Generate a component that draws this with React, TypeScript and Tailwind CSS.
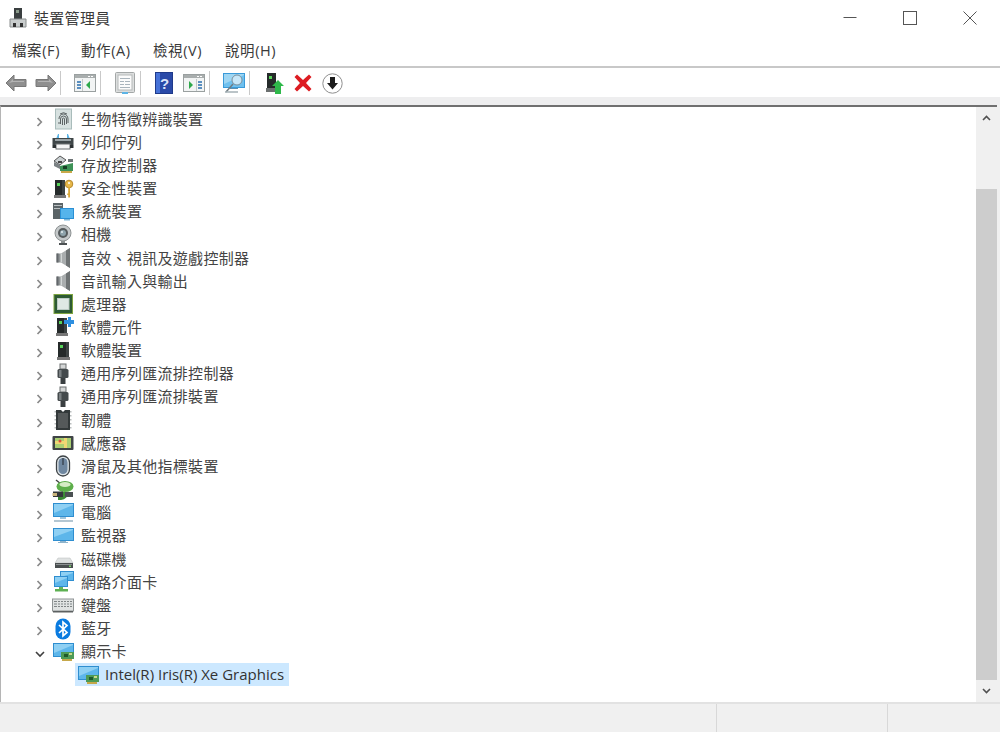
import React from "react";

type I = React.FC;
const S = ({ w = 22, h = 22, children }: { w?: number; h?: number; children: React.ReactNode }) => (
  <svg width={w} height={h} viewBox={`0 0 ${w} ${h}`} className="block shrink-0">{children}</svg>
);

const Tower = ({ x = 5, w = 11, led = "#58d35a" }: { x?: number; w?: number; led?: string }) => (
  <g>
    <path d={`M${x} 2h${w}v15h-${w}z`} fill="#252a2a" />
    <path d={`M${x + w - 3} 2h3v15h-3z`} fill="#3d4343" />
    <path d={`M${x + 2} 5h3v3h-3z`} fill={led} />
    <path d={`M${x - 1} 17h${w + 2}v3h-${w + 2}z`} fill="#777" />
  </g>
);

const Monitor = ({ x = 1, y = 2, w = 20, h = 13 }: { x?: number; y?: number; w?: number; h?: number }) => (
  <g>
    <rect x={x} y={y} width={w} height={h} fill="#2f8ed0" />
    <rect x={x + 1} y={y + 1} width={w - 2} height={h - 2} fill="#8fd0f3" />
    <path d={`M${x + 1} ${y + h - 4}L${x + w - 1} ${y + 2}V${y + h - 1}H${x + 1}z`} fill="#5db6ea" />
  </g>
);

const Card = ({ x = 8, y = 12 }: { x?: number; y?: number }) => (
  <g>
    <rect x={x} y={y} width={13} height={7} fill="#4d9a55" />
    <rect x={x + 3} y={y + 2} width={4} height={3} fill="#1f5a2a" />
    <rect x={x + 8} y={y + 1} width={3} height={2} fill="#c9d98a" />
    <path d={`M${x + 1} ${y + 7}h10v2h-10z`} fill="#c6a84a" />
  </g>
);

const Fingerprint: I = () => (
  <S>
    <rect x="3.500" y="1" width="16" height="20" fill="#d7e1e0" stroke="#a9bcbb" />
    <g fill="none" stroke="#4e5556" strokeWidth="0.900">
      <path d="M7 11a4.500 5 0 0 1 9 0v4" />
      <path d="M8.500 16v-5a3 3 0 0 1 6 0v5" />
      <path d="M10.500 17v-6a1 1 0 0 1 2 0v6" />
      <path d="M7 14v2M8 6a5.500 5 0 0 1 7 0" />
    </g>
  </S>
);
const Printer: I = () => (
  <S>
    <path d="M6 3h10l2 5H4z" fill="#5cb4e6" />
    <path d="M7 3h8v4H7z" fill="#ffffff" />
    <rect x="0.500" y="7" width="21" height="7" fill="#3f4648" />
    <rect x="3" y="8" width="16" height="2" fill="#9aa3a6" />
    <rect x="4" y="13" width="14" height="5" fill="#f5f5f5" stroke="#6a6f70" />
    <path d="M0.500 14H4v3H0.500zM18 14h3.500v3H18z" fill="#2d3234" />
  </S>
);
const Storage: I = () => (
  <S>
    <path d="M2 7l6-5 6 4-6 5z" fill="#c9cfd1" stroke="#555" />
    <path d="M6 7h4v2H6z" fill="#444" />
    <path d="M2 8v4l6 3v-4z" fill="#7a8083" />
    <path d="M8 12l13-3v8H8z" fill="#3d9257" />
    <rect x="11" y="12" width="4" height="3" fill="#173f25" />
    <path d="M9 17h11v2H9z" fill="#c9a94a" />
    <path d="M16 5h5v3h-5z" fill="#6d7375" />
  </S>
);
const Security: I = () => (
  <S>
    <Tower x={3} w={10} />
    <circle cx="17" cy="6" r="3.800" fill="#e7b84a" stroke="#b5872a" />
    <circle cx="17" cy="5" r="1" fill="#fff" />
    <path d="M16.200 9H18v10l-1 1-.8-1v-2h-1v-1.500h1z" fill="#d9a83a" />
  </S>
);
const System: I = () => (
  <S>
    <path d="M1 2h10v16H1z" fill="#5b6467" />
    <path d="M2 4h8v1H2zM2 7h8v1H2z" fill="#b9bfc1" />
    <rect x="8" y="7" width="14" height="11" fill="#2a8fd4" />
    <rect x="9" y="8" width="12" height="9" fill="#55b4ec" />
    <path d="M12 18h6v1.500h-6z" fill="#7fb7d8" />
  </S>
);
const Camera: I = () => (
  <S>
    <circle cx="11" cy="9" r="8" fill="#c4c8c9" stroke="#8d9293" />
    <circle cx="11" cy="9" r="5" fill="#555b5d" />
    <circle cx="11" cy="9" r="3" fill="#8fa4ac" />
    <circle cx="10" cy="8" r="1" fill="#e7eff2" />
    <path d="M9 17h4v2H9z" fill="#8d9293" />
    <path d="M7 19h8v2H7z" fill="#4d5254" />
  </S>
);
const Speaker: I = () => (
  <S>
    <path d="M4.500 6.500H10v9H4.500z" fill="#8f9495" />
    <path d="M9 6.500L18 1v20l-9-5.500z" fill="#a9adae" />
    <path d="M14 3.500L18 1v20l-4-2.500z" fill="#6f7475" />
    <path d="M4.500 6.500h2v9h-2z" fill="#62676a" />
    <path d="M8.500 6.500h1.500v9H8.500z" fill="#d2d6d6" />
  </S>
);
const Cpu: I = () => (
  <S>
    <rect x="1.500" y="1" width="19.500" height="20" fill="#7da43f" />
    <rect x="2.500" y="2" width="17.500" height="18" fill="#2d5a34" />
    <rect x="5" y="5" width="12.500" height="12" fill="#bccbc5" />
    <rect x="6" y="6" width="10.500" height="10" fill="#dfe8e4" />
  </S>
);
const SoftComp: I = () => (
  <S>
    <Tower x={5} w={10} />
    <path d="M12 4h4V1h3v3h3v4h-3v3h-3V8h-4z" fill="#2e8fe0" />
  </S>
);
const SoftDev: I = () => (
  <S>
    <Tower x={6} w={11} />
  </S>
);
const Usb: I = () => (
  <S>
    <rect x="8" y="1" width="6" height="5" fill="#d4d6d6" stroke="#6a6e6f" />
    <rect x="5.500" y="6" width="11" height="9" rx="1.500" fill="#444a4c" />
    <path d="M8.500 15h5v6h-5z" fill="#3a3f41" />
    <path d="M7 7h2.500v7H7z" fill="#7a8082" />
  </S>
);
const Firmware: I = () => (
  <S>
    <path d="M4 1h5l2 2 2-2h5v20H4z" fill="#33393a" />
    <rect x="6" y="4" width="10" height="15" fill="#55595a" />
    <g fill="#b9bdbd">
      <path d="M2.500 2H4v1.500H2.500zM2.500 6H4v1.500H2.500zM2.500 10H4v1.500H2.500zM2.500 14H4v1.500H2.500zM2.500 18H4v1.500H2.500zM18 2h1.500v1.500H18zM18 6h1.500v1.500H18zM18 10h1.500v1.500H18zM18 14h1.500v1.500H18zM18 18h1.500v1.500H18z" />
    </g>
  </S>
);
const Sensor: I = () => (
  <S>
    <rect x="0.500" y="4" width="21" height="14" rx="1" fill="#3f4446" />
    <rect x="3" y="6" width="16" height="10" fill="#a9cf72" />
    <path d="M3 9h9v3H3zM12 6h3v10h-3z" fill="#f0d774" />
    <circle cx="8" cy="9" r="1.500" fill="#d9523c" />
  </S>
);
const Mouse: I = () => (
  <S>
    <rect x="4.500" y="1" width="13" height="20" rx="6.500" fill="#dfe6ea" stroke="#3c4144" strokeWidth="1.300" />
    <rect x="6.500" y="3" width="9" height="16" rx="4.500" fill="#6f87a0" />
    <path d="M11 3v7" stroke="#2f3842" strokeWidth="1.200" />
  </S>
);
const Battery: I = () => (
  <S>
    <path d="M4 1l5 4" stroke="#444" strokeWidth="1.500" />
    <ellipse cx="13" cy="7.500" rx="8.500" ry="5.500" fill="#5dae4a" />
    <ellipse cx="13" cy="5.500" rx="5.500" ry="2.500" fill="#d6ecc5" />
    <path d="M6 13h10a7 7 0 0 1-7 8H6z" fill="#3b8a35" />
    <path d="M1 12.500h10v5.500H1z" fill="#33383a" />
    <path d="M0.500 14H5v3H0.500z" fill="#c8b27a" />
    <path d="M13 13h8v5h-8z" fill="#4a5052" />
  </S>
);
const Computer: I = () => (
  <S>
    <Monitor x={1} y={1} w={21} h={14} />
    <path d="M8 15h6v2H8z" fill="#9fc5dc" />
    <path d="M2 18h19v2H2z" fill="#b3c6d2" />
  </S>
);
const MonitorI: I = () => (
  <S>
    <Monitor x={1} y={3} w={21} h={13} />
    <path d="M8 16h6v1h2v1H6v-1h2z" fill="#8fb4cc" />
  </S>
);
const Disk: I = () => (
  <S>
    <path d="M6 10h12l3 5H3z" fill="#dfe2e2" stroke="#b5b9b9" strokeWidth="0.500" />
    <rect x="3" y="15" width="18" height="5" fill="#4a4f50" />
    <rect x="4" y="16" width="16" height="1" fill="#8b9091" />
    <rect x="17" y="17.500" width="2" height="1.500" fill="#7bd36a" />
  </S>
);
const Network: I = () => (
  <S>
    <Monitor x={8} y={0} w={14} h={10} />
    <Monitor x={2} y={5} w={14} h={11} />
    <path d="M7 16h4v2H7z" fill="#66b35a" />
    <path d="M3 18h13v2.500H3z" fill="#5db052" />
  </S>
);
const Keyboard: I = () => (
  <S>
    <rect x="0.500" y="5" width="21" height="12" fill="#dfe2e2" stroke="#8f9495" />
    <g fill="#7f8485">
      <path d="M2 7h18v1H2zM2 9.500h18v1H2zM2 12h18v1H2z" />
    </g>
    <g fill="#dfe2e2">
      <path d="M5 7h1v6H5zM8 7h1v6H8zM11 7h1v6h-1zM14 7h1v6h-1zM17 7h1v6h-1z" />
    </g>
    <path d="M1 17h20v1.500H1z" fill="#5c6061" />
  </S>
);
const Bluetooth: I = () => (
  <S>
    <rect x="3.500" y="0.500" width="15" height="21" rx="7.500" fill="#0a7be0" />
    <path d="M7 7l8 7.500-4 3.500V4l4 3.500L7 15" fill="none" stroke="#fff" strokeWidth="1.700" />
  </S>
);
const Display: I = () => (
  <S>
    <Monitor x={1} y={2} w={21} h={14} />
    <Card x={9} y={11} />
  </S>
);

const Chevron = ({ open }: { open?: boolean }) => (
  <svg width="10" height="10" viewBox="0 0 10 10" className="block">
    {open ? (
      <path d="M1 3l4 4 4-4" fill="none" stroke="#404040" strokeWidth="1.600" />
    ) : (
      <path d="M2.500 1l3.800 4-3.800 4" fill="none" stroke="#8a8a8a" strokeWidth="1.700" />
    )}
  </svg>
);

const rows: [string, I][] = [
  ["生物特徵辨識裝置", Fingerprint],
  ["列印佇列", Printer],
  ["存放控制器", Storage],
  ["安全性裝置", Security],
  ["系統裝置", System],
  ["相機", Camera],
  ["音效、視訊及遊戲控制器", Speaker],
  ["音訊輸入與輸出", Speaker],
  ["處理器", Cpu],
  ["軟體元件", SoftComp],
  ["軟體裝置", SoftDev],
  ["通用序列匯流排控制器", Usb],
  ["通用序列匯流排裝置", Usb],
  ["韌體", Firmware],
  ["感應器", Sensor],
  ["滑鼠及其他指標裝置", Mouse],
  ["電池", Battery],
  ["電腦", Computer],
  ["監視器", MonitorI],
  ["磁碟機", Disk],
  ["網路介面卡", Network],
  ["鍵盤", Keyboard],
  ["藍牙", Bluetooth],
  ["顯示卡", Display],
];

const Sep = () => <div className="w-px h-[24px] bg-[#c9c9c9] shrink-0" />;

const Window = ({ right }: { right?: boolean }) => (
  <svg width="22" height="18" viewBox="0 0 22 18" className="block">
    <rect x="0.500" y="0.500" width="21" height="17" fill="#f2f4f4" stroke="#9aa0a0" />
    <rect x="1" y="1" width="20" height="3" fill="#a9aeae" />
    <path d="M14 2h2v1h-2zM17 2h2v1h-2z" fill="#fff" />
    {right ? (
      <>
        <rect x="13" y="5" width="1" height="12" fill="#c4c8c8" />
        <path d="M15 7h4v2h-4zM15 10h4v2h-4zM15 13h4v2h-4z" fill="#5a8fc0" />
        <path d="M6 7l4 4-4 4z" fill="#2ea84a" />
      </>
    ) : (
      <>
        <rect x="8" y="5" width="1" height="12" fill="#c4c8c8" />
        <path d="M3 7h4v2H3zM3 10h4v2H3zM3 13h4v2H3z" fill="#5a8fc0" />
        <path d="M16 7l-4 4 4 4z" fill="#2ea84a" />
      </>
    )}
  </svg>
);

const ArrowBtn = ({ flip }: { flip?: boolean }) => (
  <svg width="22" height="18" viewBox="0 0 22 18" className="block" style={flip ? { transform: "scaleX(-1)" } : undefined}>
    <path d="M1 9l8-8v4.500h12v7H9V17z" fill="#8f8f8f" stroke="#787878" />
    <path d="M4 9l4-4v2h11v1H8z" fill="#b4b4b4" />
  </svg>
);

const Page = () => (
  <svg width="20" height="22" viewBox="0 0 20 22" className="block">
    <rect x="0.500" y="0.500" width="19" height="20" rx="1" fill="#dcdede" stroke="#a3a7a7" />
    <rect x="3" y="3" width="14" height="15" fill="#fbfbfb" stroke="#b5b9b9" />
    <path d="M5 6h10v1H5zM5 9h4v1H5zM10 9h5v1h-5zM5 12h4v1H5zM10 12h5v1h-5zM5 15h10v1H5z" fill="#a9b4bc" />
    <rect x="7" y="20" width="6" height="2" fill="#5cb4e6" />
  </svg>
);

const Help = () => (
  <svg width="18" height="22" viewBox="0 0 18 22" className="block">
    <rect x="0.500" y="0.500" width="17" height="21" fill="#2a4aa8" stroke="#1f3a8a" />
    <path d="M1 1h4v20H1z" fill="#4672d8" />
    <text x="9.500" y="16.500" textAnchor="middle" fontSize="15" fontWeight="700" fill="#dbe4fa" fontFamily="'Liberation Sans', sans-serif">?</text>
  </svg>
);

const Scan = () => (
  <svg width="22" height="21" viewBox="0 0 22 21" className="block">
    <rect x="0.500" y="0.500" width="21" height="14" fill="#9fd6f3" stroke="#3a9ad9" />
    <path d="M1 11L21 2v12H1z" fill="#6fc0ee" />
    <path d="M7 15h8v1H7z" fill="#5b8fb0" />
    <circle cx="14" cy="7" r="5" fill="#c6e6f8" stroke="#7b8f9c" />
    <path d="M10 11l-7 8" stroke="#6f7b82" strokeWidth="1.500" />
    <path d="M2 19h13" stroke="#a4b0b6" strokeWidth="1.500" />
  </svg>
);

const Enable = () => (
  <svg width="18" height="22" viewBox="0 0 18 22" className="block">
    <path d="M1 1h9v15H1z" fill="#252a2a" />
    <path d="M3 4h3v3H3z" fill="#58d35a" />
    <path d="M0 16h11v4H0z" fill="#6c7070" />
    <path d="M12 8l6 6h-3v8H9v-8H6z" fill="#2eb84a" />
  </svg>
);

const CloseX = () => (
  <svg width="18" height="18" viewBox="0 0 18 18" className="block">
    <path d="M3 0.500L9 6l6-5.500 2.500 2.500L12 9l5.500 6-2.500 2.500L9 12l-6 5.500L0.500 15 6 9 0.500 3z" fill="#dd1c22" />
  </svg>
);

const Download = () => (
  <svg width="21" height="21" viewBox="0 0 21 21" className="block">
    <circle cx="10.500" cy="10.500" r="9.700" fill="#fff" stroke="#8f8f8f" />
    <path d="M8 4h5v6h3l-5.500 6.500L5 10h3z" fill="#1c1c1c" />
  </svg>
);

const TitleIcon = () => (
  <svg width="18" height="20" viewBox="0 0 18 20" className="block">
    <path d="M5 0h8v12H5z" fill="#3a3f40" />
    <path d="M7 2h3v3H7z" fill="#8a9a8a" />
    <path d="M1 11h16v8H1z" fill="#c9cdcd" stroke="#8a8e8e" />
    <path d="M4 15h3v4H4zM11 15h3v4h-3z" fill="#333" />
  </svg>
);

const cjk = "font-['Microsoft_JhengHei','Noto_Sans_CJK_TC','Noto_Sans_CJK_JP',sans-serif]";
const menu = "font-['Open_Sans','Noto_Sans_CJK_TC','Noto_Sans_CJK_JP',sans-serif]";

export default function App() {
  return (
    <div className={`w-[1000px] h-[732px] bg-white flex flex-col overflow-hidden text-[#3a3a3a] ${cjk}`}>
      {/* Title bar */}
      <div className="h-9 flex items-center shrink-0">
        <div className="ml-[9px] w-[25px]"><TitleIcon /></div>
        <span className="text-[15px] tracking-[0.3px] leading-none pb-[2px]">裝置管理員</span>
        <div className="ml-auto flex text-[#444]">
          <div className="w-[60px] h-9 flex items-center justify-center">
            <svg width="14" height="14" viewBox="0 0 14 14"><path d="M0.500 6.500h13" stroke="#555" /></svg>
          </div>
          <div className="w-[60px] h-9 flex items-center justify-center">
            <svg width="14" height="14" viewBox="0 0 14 14"><rect x="0.500" y="0.500" width="13" height="13" fill="none" stroke="#555" /></svg>
          </div>
          <div className="w-[60px] h-9 flex items-center justify-center">
            <svg width="14" height="14" viewBox="0 0 14 14"><path d="M0.500 0.500l13 13M13.500 0.500l-13 13" stroke="#555" /></svg>
          </div>
        </div>
      </div>

      {/* Menu bar */}
      <div className={`h-[32px] shrink-0 flex items-center border-b-2 border-[#c8c8c8] pl-3 pt-[1px] text-[14.500px] tracking-[0.6px] gap-[21px] leading-none ${menu}`}>
        <span className="w-[48px] whitespace-nowrap">檔案(F)</span>
        <span className="w-[51px] whitespace-nowrap">動作(A)</span>
        <span className="w-[51px] whitespace-nowrap">檢視(V)</span>
        <span className="w-[51px] whitespace-nowrap">說明(H)</span>
      </div>

      {/* Toolbar */}
      <div className="h-[29px] shrink-0 flex items-center pt-[1px]">
        <div className="w-[31px] flex justify-center"><ArrowBtn /></div>
        <div className="w-[29px] flex justify-center"><ArrowBtn flip /></div>
        <Sep />
        <div className="w-[8px]" />
        <div className="w-[31px] flex justify-center"><Window /></div>
        <Sep />
        <div className="w-[8px]" />
        <div className="w-[31px] flex justify-center"><Page /></div>
        <Sep />
        <div className="w-[8px]" />
        <div className="w-[29px] flex justify-center"><Help /></div>
        <div className="w-[31px] flex justify-center"><Window right /></div>
        <Sep />
        <div className="w-[8px]" />
        <div className="w-[31px] flex justify-center"><Scan /></div>
        <Sep />
        <div className="w-[10px]" />
        <div className="w-[29px] flex justify-center"><Enable /></div>
        <div className="w-[28px] flex justify-center"><CloseX /></div>
        <div className="w-[31px] flex justify-center"><Download /></div>
      </div>

      {/* Band */}
      <div className="h-[8px] bg-[#eeeeef] shrink-0" />

      {/* Tree area */}
      <div className="flex-1 min-h-0 flex flex-col bg-[#f0f0f0]">
        <div className="flex-1 min-h-0 flex border-t-2 border-[#707070] border-l border-l-[#b5b5b5] mr-[3px] bg-white">
          <div className="flex-1 min-w-0 pt-[0.500px]">
            {rows.map(([label, Icon], i) => (
              <div key={label} className="h-[23.170px] flex items-center">
                <div className="w-[33px] shrink-0" />
                <div className="w-[12px] shrink-0 flex justify-center pt-[5px]"><Chevron open={i === rows.length - 1} /></div>
                <div className="w-[6px] shrink-0" />
                <div className="w-[29px] shrink-0"><Icon /></div>
                <span className="text-[15px] tracking-[0.3px] leading-none whitespace-nowrap text-[#444] pb-[2px]">{label}</span>
              </div>
            ))}
            <div className="h-[23.170px] flex items-center">
              <div className="ml-[74px] h-[23px] w-[214px] bg-[#cce8ff] flex items-center pl-[2px]">
                <div className="w-[28px] shrink-0"><Display /></div>
                <span className="text-[15px] leading-none whitespace-nowrap text-[#333] font-['Open_Sans','Noto_Sans',sans-serif]">Intel(R) Iris(R) Xe Graphics</span>
              </div>
            </div>
          </div>
          <div className="w-[21px] shrink-0 bg-[#f0f0f0] flex flex-col">
            <div className="h-[21px] flex items-center justify-center">
              <svg width="9" height="6" viewBox="0 0 9 6"><path d="M1 5l3.500-3.500L8 5" fill="none" stroke="#505050" strokeWidth="1.600" /></svg>
            </div>
            <div className="h-[61px]" />
            <div className="flex-1 bg-[#cdcdcd]" />
            <div className="h-[22px] flex items-center justify-center">
              <svg width="9" height="6" viewBox="0 0 9 6"><path d="M1 1l3.500 3.500L8 1" fill="none" stroke="#505050" strokeWidth="1.600" /></svg>
            </div>
          </div>
        </div>
        {/* Status bar */}
        <div className="h-[30px] shrink-0 flex border-t-2 border-[#e2e2e2]">
          <div className="w-[717px] border-r border-[#d8d8d8]" />
          <div className="w-[171px] border-r border-[#d8d8d8]" />
        </div>
      </div>
    </div>
  );
}
